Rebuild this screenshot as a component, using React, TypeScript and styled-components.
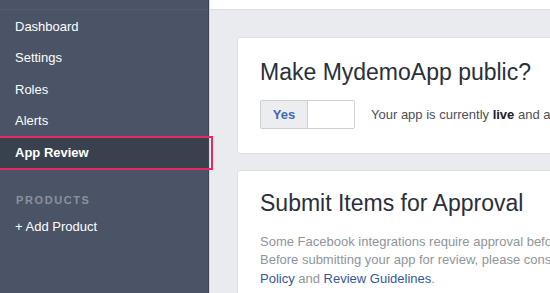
import React from "react";
import styled, { createGlobalStyle } from "styled-components";

const GlobalStyle = createGlobalStyle`
  html, body {
    margin: 0;
    padding: 0;
    overflow: hidden;
  }
  body {
    font-family: "Liberation Sans", Arial, Helvetica, sans-serif;
    -webkit-font-smoothing: antialiased;
  }
`;

const navItems = [
  { label: "Dashboard" },
  { label: "Settings" },
  { label: "Roles" },
  { label: "Alerts" },
  { label: "App Review", active: true },
];

const App = () => {
  return (
    <>
      <GlobalStyle />
      <Page>
        <Sidebar>
          <SidebarTop />
          {navItems.map((item) => (
            <NavItem key={item.label} $active={item.active}>
              {item.label}
            </NavItem>
          ))}
          <SectionLabel>Products</SectionLabel>
          <NavItem>+ Add Product</NavItem>
        </Sidebar>

        <Main>
          <TopBar />
          <Content>
            <Card $top="20px">
              <CardTitle>Make MydemoApp public?</CardTitle>
              <ToggleRow>
                <Toggle>
                  <ToggleOption $selected>Yes</ToggleOption>
                  <ToggleOption />
                </Toggle>
                <StatusText>
                  Your app is currently <b>live</b> and available to the public.
                </StatusText>
              </ToggleRow>
            </Card>

            <Card $top="18px">
              <CardTitle>Submit Items for Approval</CardTitle>
              <Description>
                Some Facebook integrations require approval before public usage.
                <br />
                Before submitting your app for review, please consult our <Link>Platform</Link>
                <br />
                <Link>Policy</Link> and <Link>Review Guidelines</Link>.
              </Description>
            </Card>
          </Content>
        </Main>
      </Page>
    </>
  );
};

export default App;

const Page = styled.div`
  display: flex;
  width: 550px;
  height: 293px;
  overflow: hidden;
`;

const Sidebar = styled.nav`
  position: relative;
  z-index: 1;
  flex: 0 0 208px;
  display: flex;
  flex-direction: column;
  background: #4b5466;
  border-right: 1px solid #3c4352;
`;

const SidebarTop = styled.div`
  height: 9px;
  border-bottom: 1px solid rgba(255, 255, 255, 0.05);
  margin-bottom: 0.5px;
`;

const NavItem = styled.div<{ $active?: boolean }>`
  position: relative;
  height: 31.5px;
  line-height: 31.5px;
  padding-left: 15px;
  font-size: 13px;
  color: #ffffff;
  font-weight: ${(p) => (p.$active ? 700 : 400)};
  background: ${(p) => (p.$active ? "#39414f" : "transparent")};
  white-space: nowrap;

  ${(p) =>
    p.$active &&
    `
    &::after {
      content: "";
      position: absolute;
      top: -1px;
      bottom: -1.5px;
      left: -4px;
      right: -5px;
      border: 2px solid #e62a5f;
    }
  `}
`;

const SectionLabel = styled.div`
  margin: 21.5px 0 1.5px;
  padding-left: 16px;
  height: 20px;
  line-height: 20px;
  font-size: 11px;
  font-weight: 700;
  letter-spacing: 1.6px;
  text-transform: uppercase;
  color: #8a919e;
`;

const Main = styled.main`
  flex: 1;
  min-width: 0;
  display: flex;
  flex-direction: column;
  background: #e9ebee;
  border-left: 1px solid #d6d9de;
  overflow: hidden;
`;

const TopBar = styled.div`
  flex: 0 0 9px;
  background: #ffffff;
  border-bottom: 1px solid #dadde1;
`;

const Content = styled.div`
  display: flex;
  flex-direction: column;
  gap: 16px;
  padding: 27px 0 0 27px;
`;

const Card = styled.section<{ $top: string }>`
  flex-shrink: 0;
  width: 460px;
  padding: ${(p) => p.$top} 22px 24px;
  background: #ffffff;
  border: 1px solid #dddfe2;
  border-radius: 3px;
`;

const CardTitle = styled.h2`
  margin: 0;
  font-size: 23px;
  line-height: 28px;
  font-weight: 400;
  color: #2a2f3a;
  white-space: nowrap;
`;

const ToggleRow = styled.div`
  display: flex;
  align-items: center;
  gap: 16px;
  margin-top: 13.5px;
`;

const Toggle = styled.div`
  display: flex;
  flex-shrink: 0;
  width: 95px;
  height: 29px;
  box-sizing: border-box;
  border: 1px solid #ccd0d5;
  border-radius: 2px;
  overflow: hidden;
`;

const ToggleOption = styled.div<{ $selected?: boolean }>`
  flex: 1;
  display: flex;
  align-items: center;
  justify-content: center;
  font-size: 13px;
  font-weight: 700;
  color: #4267b2;
  background: ${(p) => (p.$selected ? "#ebedf0" : "#ffffff")};
  border-right: ${(p) => (p.$selected ? "1px solid #ccd0d5" : "none")};
`;

const StatusText = styled.span`
  font-size: 13px;
  color: #4b4f56;
  white-space: nowrap;

  b {
    color: #1d2129;
  }
`;

const Description = styled.p`
  margin: 16px 0 0;
  font-size: 13px;
  line-height: 18.5px;
  color: #90949c;
  white-space: nowrap;
`;

const Link = styled.span`
  color: #365899;
`;
